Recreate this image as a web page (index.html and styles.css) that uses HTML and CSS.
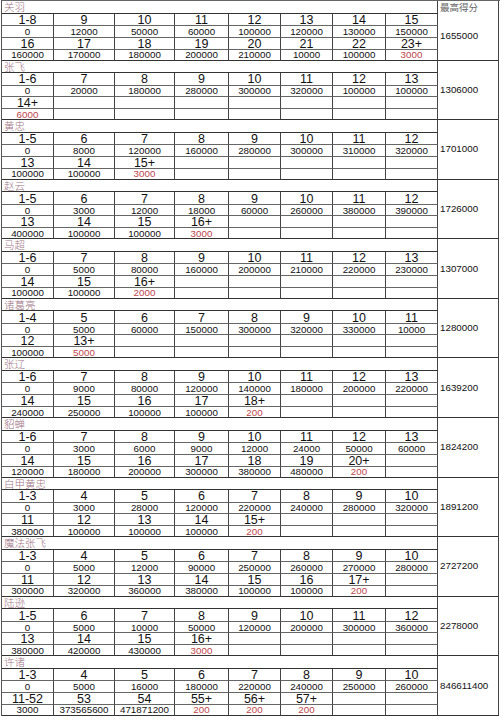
FILE: index.html
```html
<!DOCTYPE html>
<html lang="zh">
<head>
<meta charset="utf-8">
<title>武将得分表</title>
<link rel="stylesheet" href="styles.css">
</head>
<body>
<div class="sheet">

<div class="sec">
  <div class="name">关羽</div>
  <div class="score first"><span class="head">最高得分</span><span class="num">1655000</span></div>
  <div class="l">1-8</div><div class="l">9</div><div class="l">10</div><div class="l">11</div><div class="l">12</div><div class="l">13</div><div class="l">14</div><div class="l">15</div>
  <div class="v">0</div><div class="v">12000</div><div class="v">50000</div><div class="v">60000</div><div class="v">100000</div><div class="v">120000</div><div class="v">130000</div><div class="v">150000</div>
  <div class="l">16</div><div class="l">17</div><div class="l">18</div><div class="l">19</div><div class="l">20</div><div class="l">21</div><div class="l">22</div><div class="l">23+</div>
  <div class="v">160000</div><div class="v">170000</div><div class="v">180000</div><div class="v">200000</div><div class="v">210000</div><div class="v">10000</div><div class="v">100000</div><div class="v red">3000</div>
</div>

<div class="sec">
  <div class="name">张飞</div>
  <div class="score">1306000</div>
  <div class="l">1-6</div><div class="l">7</div><div class="l">8</div><div class="l">9</div><div class="l">10</div><div class="l">11</div><div class="l">12</div><div class="l">13</div>
  <div class="v">0</div><div class="v">20000</div><div class="v">180000</div><div class="v">280000</div><div class="v">300000</div><div class="v">320000</div><div class="v">100000</div><div class="v">100000</div>
  <div class="l">14+</div><div class="l"></div><div class="l"></div><div class="l"></div><div class="l"></div><div class="l"></div><div class="l"></div><div class="l"></div>
  <div class="v red">6000</div><div class="v"></div><div class="v"></div><div class="v"></div><div class="v"></div><div class="v"></div><div class="v"></div><div class="v"></div>
</div>

<div class="sec">
  <div class="name">黄忠</div>
  <div class="score">1701000</div>
  <div class="l">1-5</div><div class="l">6</div><div class="l">7</div><div class="l">8</div><div class="l">9</div><div class="l">10</div><div class="l">11</div><div class="l">12</div>
  <div class="v">0</div><div class="v">8000</div><div class="v">120000</div><div class="v">160000</div><div class="v">280000</div><div class="v">300000</div><div class="v">310000</div><div class="v">320000</div>
  <div class="l">13</div><div class="l">14</div><div class="l">15+</div><div class="l"></div><div class="l"></div><div class="l"></div><div class="l"></div><div class="l"></div>
  <div class="v">100000</div><div class="v">100000</div><div class="v red">3000</div><div class="v"></div><div class="v"></div><div class="v"></div><div class="v"></div><div class="v"></div>
</div>

<div class="sec">
  <div class="name">赵云</div>
  <div class="score">1726000</div>
  <div class="l">1-5</div><div class="l">6</div><div class="l">7</div><div class="l">8</div><div class="l">9</div><div class="l">10</div><div class="l">11</div><div class="l">12</div>
  <div class="v">0</div><div class="v">3000</div><div class="v">12000</div><div class="v">18000</div><div class="v">60000</div><div class="v">260000</div><div class="v">380000</div><div class="v">390000</div>
  <div class="l">13</div><div class="l">14</div><div class="l">15</div><div class="l">16+</div><div class="l"></div><div class="l"></div><div class="l"></div><div class="l"></div>
  <div class="v">400000</div><div class="v">100000</div><div class="v">100000</div><div class="v red">3000</div><div class="v"></div><div class="v"></div><div class="v"></div><div class="v"></div>
</div>

<div class="sec">
  <div class="name">马超</div>
  <div class="score">1307000</div>
  <div class="l">1-6</div><div class="l">7</div><div class="l">8</div><div class="l">9</div><div class="l">10</div><div class="l">11</div><div class="l">12</div><div class="l">13</div>
  <div class="v">0</div><div class="v">5000</div><div class="v">80000</div><div class="v">160000</div><div class="v">200000</div><div class="v">210000</div><div class="v">220000</div><div class="v">230000</div>
  <div class="l">14</div><div class="l">15</div><div class="l">16+</div><div class="l"></div><div class="l"></div><div class="l"></div><div class="l"></div><div class="l"></div>
  <div class="v">100000</div><div class="v">100000</div><div class="v red">2000</div><div class="v"></div><div class="v"></div><div class="v"></div><div class="v"></div><div class="v"></div>
</div>

<div class="sec">
  <div class="name">诸葛亮</div>
  <div class="score">1280000</div>
  <div class="l">1-4</div><div class="l">5</div><div class="l">6</div><div class="l">7</div><div class="l">8</div><div class="l">9</div><div class="l">10</div><div class="l">11</div>
  <div class="v">0</div><div class="v">5000</div><div class="v">60000</div><div class="v">150000</div><div class="v">300000</div><div class="v">320000</div><div class="v">330000</div><div class="v">10000</div>
  <div class="l">12</div><div class="l">13+</div><div class="l"></div><div class="l"></div><div class="l"></div><div class="l"></div><div class="l"></div><div class="l"></div>
  <div class="v">100000</div><div class="v red">5000</div><div class="v"></div><div class="v"></div><div class="v"></div><div class="v"></div><div class="v"></div><div class="v"></div>
</div>

<div class="sec">
  <div class="name">张辽</div>
  <div class="score">1639200</div>
  <div class="l">1-6</div><div class="l">7</div><div class="l">8</div><div class="l">9</div><div class="l">10</div><div class="l">11</div><div class="l">12</div><div class="l">13</div>
  <div class="v">0</div><div class="v">9000</div><div class="v">80000</div><div class="v">120000</div><div class="v">140000</div><div class="v">180000</div><div class="v">200000</div><div class="v">220000</div>
  <div class="l">14</div><div class="l">15</div><div class="l">16</div><div class="l">17</div><div class="l">18+</div><div class="l"></div><div class="l"></div><div class="l"></div>
  <div class="v">240000</div><div class="v">250000</div><div class="v">100000</div><div class="v">100000</div><div class="v red">200</div><div class="v"></div><div class="v"></div><div class="v"></div>
</div>

<div class="sec">
  <div class="name">貂蝉</div>
  <div class="score">1824200</div>
  <div class="l">1-6</div><div class="l">7</div><div class="l">8</div><div class="l">9</div><div class="l">10</div><div class="l">11</div><div class="l">12</div><div class="l">13</div>
  <div class="v">0</div><div class="v">3000</div><div class="v">6000</div><div class="v">9000</div><div class="v">12000</div><div class="v">24000</div><div class="v">50000</div><div class="v">60000</div>
  <div class="l">14</div><div class="l">15</div><div class="l">16</div><div class="l">17</div><div class="l">18</div><div class="l">19</div><div class="l">20+</div><div class="l"></div>
  <div class="v">120000</div><div class="v">180000</div><div class="v">200000</div><div class="v">300000</div><div class="v">380000</div><div class="v">480000</div><div class="v red">200</div><div class="v"></div>
</div>

<div class="sec">
  <div class="name">白甲黄忠</div>
  <div class="score">1891200</div>
  <div class="l">1-3</div><div class="l">4</div><div class="l">5</div><div class="l">6</div><div class="l">7</div><div class="l">8</div><div class="l">9</div><div class="l">10</div>
  <div class="v">0</div><div class="v">3000</div><div class="v">28000</div><div class="v">120000</div><div class="v">220000</div><div class="v">240000</div><div class="v">280000</div><div class="v">320000</div>
  <div class="l">11</div><div class="l">12</div><div class="l">13</div><div class="l">14</div><div class="l">15+</div><div class="l"></div><div class="l"></div><div class="l"></div>
  <div class="v">380000</div><div class="v">100000</div><div class="v">100000</div><div class="v">100000</div><div class="v red">200</div><div class="v"></div><div class="v"></div><div class="v"></div>
</div>

<div class="sec">
  <div class="name">魔法张飞</div>
  <div class="score">2727200</div>
  <div class="l">1-3</div><div class="l">4</div><div class="l">5</div><div class="l">6</div><div class="l">7</div><div class="l">8</div><div class="l">9</div><div class="l">10</div>
  <div class="v">0</div><div class="v">5000</div><div class="v">12000</div><div class="v">90000</div><div class="v">250000</div><div class="v">260000</div><div class="v">270000</div><div class="v">280000</div>
  <div class="l">11</div><div class="l">12</div><div class="l">13</div><div class="l">14</div><div class="l">15</div><div class="l">16</div><div class="l">17+</div><div class="l"></div>
  <div class="v">300000</div><div class="v">320000</div><div class="v">360000</div><div class="v">380000</div><div class="v">100000</div><div class="v">100000</div><div class="v red">200</div><div class="v"></div>
</div>

<div class="sec">
  <div class="name">陆逊</div>
  <div class="score">2278000</div>
  <div class="l">1-5</div><div class="l">6</div><div class="l">7</div><div class="l">8</div><div class="l">9</div><div class="l">10</div><div class="l">11</div><div class="l">12</div>
  <div class="v">0</div><div class="v">5000</div><div class="v">10000</div><div class="v">50000</div><div class="v">120000</div><div class="v">200000</div><div class="v">300000</div><div class="v">360000</div>
  <div class="l">13</div><div class="l">14</div><div class="l">15</div><div class="l">16+</div><div class="l"></div><div class="l"></div><div class="l"></div><div class="l"></div>
  <div class="v">380000</div><div class="v">420000</div><div class="v">430000</div><div class="v red">3000</div><div class="v"></div><div class="v"></div><div class="v"></div><div class="v"></div>
</div>

<div class="sec">
  <div class="name">许诸</div>
  <div class="score">846611400</div>
  <div class="l">1-3</div><div class="l">4</div><div class="l">5</div><div class="l">6</div><div class="l">7</div><div class="l">8</div><div class="l">9</div><div class="l">10</div>
  <div class="v">0</div><div class="v">5000</div><div class="v">16000</div><div class="v">180000</div><div class="v">220000</div><div class="v">240000</div><div class="v">250000</div><div class="v">260000</div>
  <div class="l">11-52</div><div class="l">53</div><div class="l">54</div><div class="l">55+</div><div class="l">56+</div><div class="l">57+</div><div class="l"></div><div class="l"></div>
  <div class="v">3000</div><div class="v">373565600</div><div class="v">471871200</div><div class="v red">200</div><div class="v red">200</div><div class="v red">200</div><div class="v"></div><div class="v"></div>
</div>

</div>
</body>
</html>
```
FILE: styles.css
```css
html, body {
  margin: 0;
  padding: 0;
  background: #ffffff;
}

.sheet {
  margin-left: 1px;
  width: 498px;
  border-top: 1px solid #666;
  border-left: 1px solid #555;
  display: flex;
  flex-direction: column;
  font-family: "Liberation Sans", Arial, sans-serif;
  color: #111;
}

.sec {
  display: grid;
  grid-template-columns: 52px 61px 60px 54px 52px 52px 53px 52px 61px;
  grid-template-rows: 12.6px 12.4px 11.6px 12px 11px;
}

.sec > div {
  box-sizing: border-box;
  border-right: 1px solid #444;
  border-bottom: 1px solid #666;
  white-space: nowrap;
}

.name {
  grid-column: 1 / 9;
  font-family: "Noto Sans CJK SC", sans-serif;
  font-weight: 300;
  font-size: 10.5px;
  line-height: 11.5px;
  color: #a07585;
  padding-left: 2px;
  border-bottom-color: #333 !important;
}

.score {
  grid-column: 9;
  grid-row: 1 / 6;
  display: flex;
  align-items: center;
  padding-left: 2px;
  font-size: 9.8px;
  line-height: 10px;
  color: #111;
  border-bottom-color: #333 !important;
}

.score.first {
  flex-direction: column;
  align-items: flex-start;
  justify-content: flex-start;
}

.head {
  font-family: "Noto Sans CJK SC", sans-serif;
  font-size: 9.5px;
  line-height: 11px;
  color: #666;
  margin-top: 1px;
}

.first .num {
  margin-top: 18px;
}

.l {
  font-size: 12.5px;
  line-height: 10px;
  display: flex;
  align-items: center;
  justify-content: center;
  padding-top: 1px;
}

.v {
  font-size: 9.8px;
  line-height: 9px;
  display: flex;
  align-items: center;
  justify-content: center;
}

.sec > .v:nth-last-child(-n+8) {
  border-bottom-color: #333;
}

.red {
  color: #c0464b;
}
```
